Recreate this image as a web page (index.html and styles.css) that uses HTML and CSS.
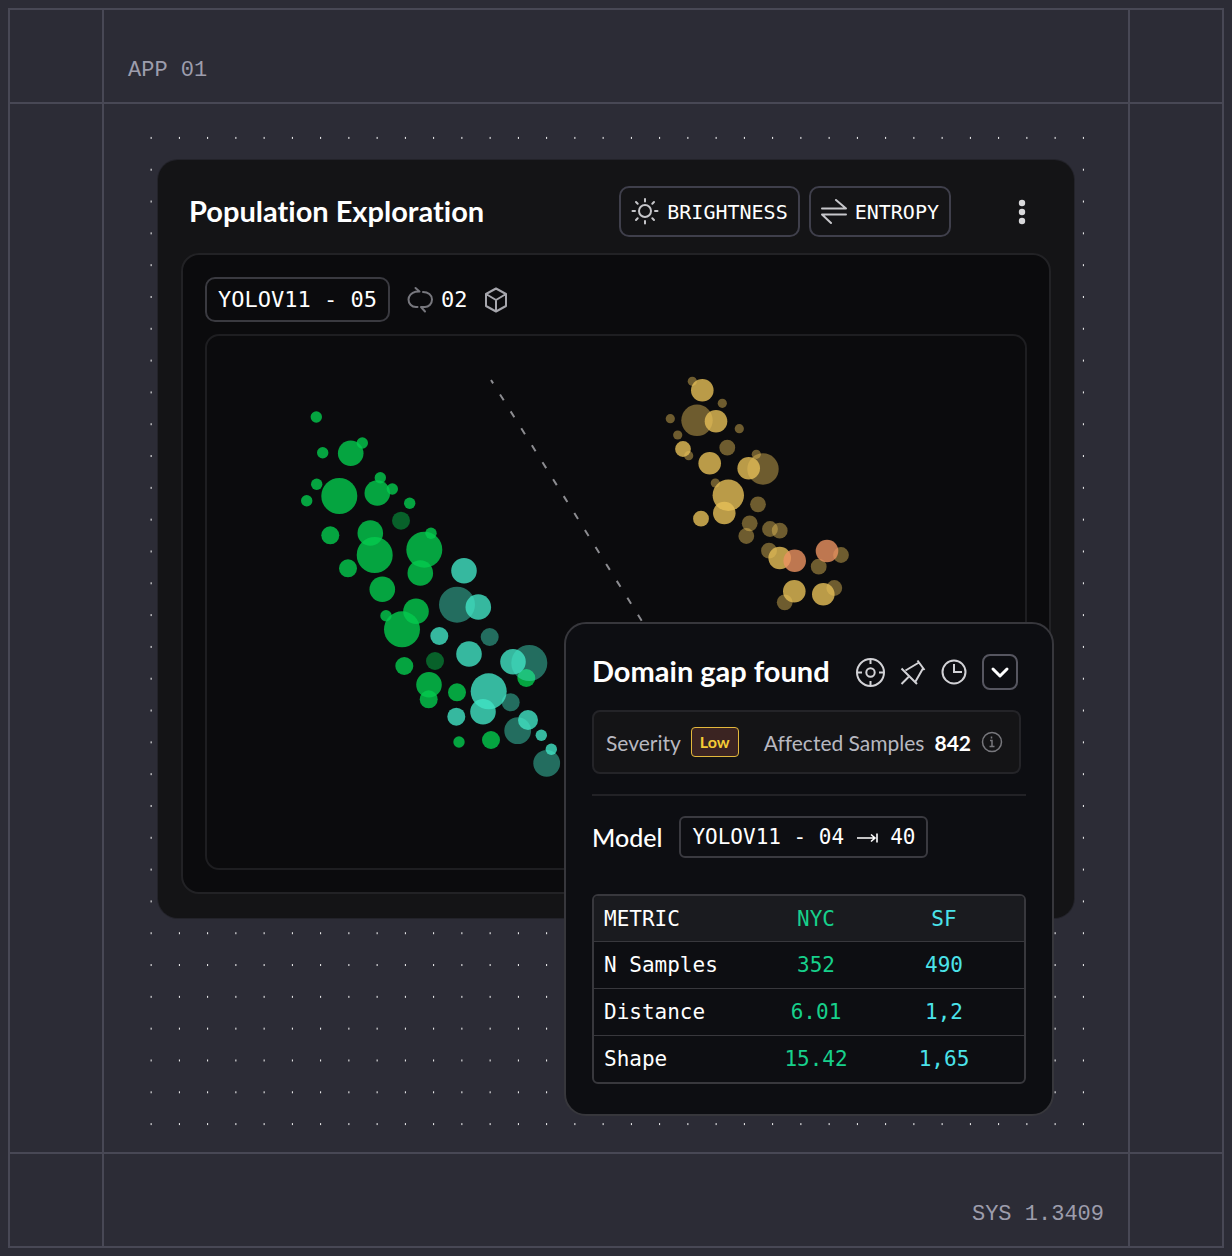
FILE: index.html
```html
<!DOCTYPE html>
<html lang="en">
<head>
  <meta charset="UTF-8">
  <meta name="viewport" content="width=device-width, initial-scale=1.0">
  <title>Population Exploration</title>
  <link rel="stylesheet" href="styles.css">
</head>
<body>
  <div class="frame">
    <!-- Top strip -->
    <div class="cell"></div>
    <header class="cell cell-top">APP 01</header>
    <div class="cell"></div>

    <!-- Middle: dotted canvas with the app window -->
    <div class="cell"></div>
    <main class="cell cell-main">
      <div class="dots">
        <section class="card">
          <div class="card-header">
            <h1>Population Exploration</h1>
            <button class="tool" type="button">
              <svg width="28" height="28" viewBox="0 0 28 28" fill="none" stroke="#c6c6ca" stroke-width="2" stroke-linecap="round">
                <circle cx="14" cy="13" r="6"/>
                <path d="M14 1v2.500M14 23v2.500M1.500 13H4M24 13h2.500M5 4l1.700 1.700M21.300 20.300L23 22M5 22l1.700-1.700M21.300 5.700L23 4"/>
              </svg>
              BRIGHTNESS
            </button>
            <button class="tool" type="button">
              <svg width="26" height="26" viewBox="0 0 26 26" fill="none" stroke="#c6c6ca" stroke-width="2" stroke-linecap="round" stroke-linejoin="round">
                <path d="M1 9.500h24l-10-8.500M25 15.500H1l9 8.500"/>
              </svg>
              ENTROPY
            </button>
            <button class="kebab" type="button" aria-label="More options">
              <svg width="20" height="28" viewBox="0 0 20 28" fill="#d8d8da">
                <circle cx="10" cy="5" r="3.200"/>
                <circle cx="10" cy="14" r="3.200"/>
                <circle cx="10" cy="23" r="3.200"/>
              </svg>
            </button>
          </div>

          <div class="panel">
            <div class="panel-bar">
              <span class="chip">YOLOV11 - 05</span>
              <span class="runs">
                <svg width="28" height="28" viewBox="0 0 28 28" fill="none" stroke="#77777d" stroke-width="2" stroke-linecap="round" stroke-linejoin="round">
                  <path d="M8.500 2l4 3.500-4 .2C4.500 6.500 1.500 10 1.500 13.500 1.500 17.500 4.500 21 9 21h1.500M16 6c5 0 9 3 9 7.500S21.500 21 18 21h-4l4 4.500"/>
                </svg>
                02
              </span>
              <svg width="24" height="26" viewBox="0 0 24 26" fill="none" stroke="#a6a6ac" stroke-width="2" stroke-linejoin="round">
                <path d="M12 1.500l10 5.500v12l-10 5.500L2 19V7zM2 7l10 6 10-6M12 13v11.500"/>
              </svg>
            </div>

            <!-- Scatter plot -->
            <svg class="plot" viewBox="207 336 818 532">
              <path class="split" d="M491 380L650 634"/>
              <g class="green">
                <circle cx="316.300" cy="417" r="5.700"/>
                <circle cx="362.300" cy="443" r="5.700"/>
                <circle cx="350.700" cy="453.300" r="12.800"/>
                <circle cx="322.700" cy="452.700" r="5.700"/>
                <circle cx="380.300" cy="477.700" r="5.700"/>
                <circle cx="316.700" cy="484.300" r="5.700"/>
                <circle cx="306.700" cy="500.700" r="5.700"/>
                <circle cx="339.300" cy="496" r="18"/>
                <circle cx="377.300" cy="493" r="12.800"/>
                <circle cx="392.300" cy="489" r="5.700"/>
                <circle cx="409.700" cy="503.300" r="5.700"/>
                <circle cx="330.300" cy="535.300" r="9"/>
                <circle cx="370.300" cy="533" r="12.800"/>
                <circle cx="374.700" cy="555" r="18"/>
                <circle cx="424.300" cy="549.700" r="18"/>
                <circle cx="431" cy="533.300" r="5.700"/>
                <circle cx="420.300" cy="573" r="12.800"/>
                <circle cx="348" cy="568.300" r="9"/>
                <circle cx="382.300" cy="589.300" r="12.800"/>
                <circle cx="416" cy="611.300" r="12.800"/>
                <circle cx="386" cy="615.700" r="5.700"/>
                <circle cx="402" cy="629.300" r="18"/>
                <circle cx="404.300" cy="666" r="9"/>
                <circle cx="429" cy="684.700" r="12.800"/>
                <circle cx="428.700" cy="699.300" r="9"/>
                <circle cx="457" cy="692.300" r="9"/>
                <circle cx="459" cy="742" r="5.700"/>
                <circle cx="491" cy="740" r="9"/>
                <circle cx="526.300" cy="678" r="9"/>
                <circle class="dim" cx="401" cy="520.700" r="9"/>
                <circle class="dim" cx="435" cy="661" r="9"/>
              </g>
              <g class="teal">
                <circle class="dim" cx="457" cy="604.700" r="18"/>
                <circle class="dim" cx="489.700" cy="637" r="9"/>
                <circle class="dim" cx="529.300" cy="663" r="18"/>
                <circle class="dim" cx="510.700" cy="702.300" r="9"/>
                <circle class="dim" cx="517.700" cy="730.700" r="13.400"/>
                <circle class="dim" cx="546.700" cy="763.300" r="13.400"/>
                <circle cx="464" cy="570.700" r="12.800"/>
                <circle cx="478.300" cy="607" r="12.800"/>
                <circle cx="439.300" cy="636" r="9"/>
                <circle cx="469" cy="654" r="12.800"/>
                <circle cx="513" cy="661.700" r="12.800"/>
                <circle cx="488.700" cy="691.300" r="18"/>
                <circle cx="483" cy="711.700" r="12.800"/>
                <circle cx="456.300" cy="716.700" r="9"/>
                <circle cx="528" cy="720" r="10"/>
                <circle cx="541.300" cy="735.300" r="5.700"/>
                <circle cx="551.300" cy="749.300" r="5.700"/>
              </g>
              <g class="yellow">
                <circle class="dim" cx="692.300" cy="381.300" r="4.600"/>
                <circle class="dim" cx="722.300" cy="403.300" r="4.600"/>
                <circle class="dim" cx="670.300" cy="418.700" r="4.600"/>
                <circle class="dim" cx="739.300" cy="428.700" r="4.600"/>
                <circle class="dim" cx="677.700" cy="435" r="4.600"/>
                <circle class="dim" cx="688.700" cy="455.700" r="4.600"/>
                <circle class="dim" cx="697" cy="420.300" r="15.700"/>
                <circle class="dim" cx="727.300" cy="447.700" r="7.900"/>
                <circle class="dim" cx="756.300" cy="454.300" r="4.600"/>
                <circle class="dim" cx="763" cy="469" r="15.700"/>
                <circle class="dim" cx="715.300" cy="483" r="4.600"/>
                <circle class="dim" cx="758" cy="504.300" r="7.900"/>
                <circle class="dim" cx="749.700" cy="523.300" r="7.900"/>
                <circle class="dim" cx="746.300" cy="536" r="7.900"/>
                <circle class="dim" cx="770" cy="529" r="7.900"/>
                <circle class="dim" cx="779.700" cy="530.700" r="7.900"/>
                <circle class="dim" cx="769" cy="550.700" r="7.900"/>
                <circle class="dim" cx="841" cy="555" r="7.900"/>
                <circle class="dim" cx="818.700" cy="566.700" r="7.900"/>
                <circle class="dim" cx="834.300" cy="588" r="7.900"/>
                <circle class="dim" cx="784.700" cy="602.300" r="7.900"/>
                <circle cx="702.300" cy="390.300" r="11.300"/>
                <circle cx="716" cy="421.300" r="11.300"/>
                <circle cx="683" cy="449" r="7.900"/>
                <circle cx="709.700" cy="463.300" r="11.300"/>
                <circle cx="748.700" cy="468.300" r="11.300"/>
                <circle cx="728.300" cy="495.300" r="15.700"/>
                <circle cx="724.300" cy="513" r="11.300"/>
                <circle cx="701" cy="518.700" r="7.900"/>
                <circle cx="779.700" cy="558" r="11.300"/>
                <circle cx="794.300" cy="591.300" r="11.300"/>
                <circle cx="823.300" cy="594.300" r="11.300"/>
              </g>
              <g class="orange">
                <circle cx="794.700" cy="560.700" r="11.300"/>
                <circle cx="827" cy="551" r="11.300"/>
              </g>
            </svg>
          </div>

          <!-- Finding popover -->
          <aside class="popover">
            <div class="popover-header">
              <h2>Domain gap found</h2>
              <button class="icon-btn" type="button" aria-label="Locate">
                <svg width="30" height="30" viewBox="0 0 30 30" fill="none" stroke="#d2d2d6" stroke-width="2">
                  <circle cx="15.500" cy="15.500" r="13.500"/>
                  <circle cx="15.500" cy="15.500" r="4.200"/>
                  <path d="M15.500 2v5M15.500 24v5M2 15.500h5M24 15.500h5"/>
                </svg>
              </button>
              <button class="icon-btn" type="button" aria-label="Pin">
                <svg width="26" height="26" viewBox="0 0 26 26" fill="none" stroke="#d2d2d6" stroke-width="2">
                  <path d="M17.500 1.500l7 9.500M1.500 9.500L17 25M1.500 25l7-7M19 3.500L5.500 11.500M23.500 8.500L15.500 22.500"/>
                </svg>
              </button>
              <button class="icon-btn" type="button" aria-label="History">
                <svg width="26" height="26" viewBox="0 0 26 26" fill="none" stroke="#d2d2d6" stroke-width="2">
                  <circle cx="13" cy="13" r="11.500"/>
                  <path d="M13 5v8h8"/>
                </svg>
              </button>
              <button class="toggle" type="button" aria-label="Collapse">
                <svg width="20" height="20" viewBox="0 0 20 20" fill="none" stroke="#fff" stroke-width="3" stroke-linecap="round" stroke-linejoin="round">
                  <path d="M3 7l7 7 7-7"/>
                </svg>
              </button>
            </div>

            <div class="summary">
              <span>Severity</span>
              <span class="badge">Low</span>
              <span>Affected Samples</span>
              <strong>842</strong>
              <svg width="22" height="22" viewBox="0 0 22 22" fill="none" stroke="#77777c" stroke-width="1.500">
                <circle cx="11" cy="11" r="9.500"/>
                <path d="M9 9.500h2v6M8.500 15.500h5M10.500 5.500v2"/>
              </svg>
            </div>

            <div class="model">
              <span>Model</span>
              <span class="chip chip-small">
                YOLOV11 - 04
                <svg width="22" height="14" viewBox="0 0 22 14" fill="none" stroke="#fff" stroke-width="1.600">
                  <path d="M1 8h18M15 4.500l4 3.500-4 3.500M21 3.500v9"/>
                </svg>
                40
              </span>
            </div>

            <table class="metrics">
              <thead>
                <tr><th>METRIC</th><th>NYC</th><th>SF</th></tr>
              </thead>
              <tbody>
                <tr><td>N Samples</td><td>352</td><td>490</td></tr>
                <tr><td>Distance</td><td>6.01</td><td>1,2</td></tr>
                <tr><td>Shape</td><td>15.42</td><td>1,65</td></tr>
              </tbody>
            </table>
          </aside>
        </section>
      </div>
    </main>
    <div class="cell"></div>

    <!-- Bottom strip -->
    <div class="cell"></div>
    <footer class="cell cell-bottom">SYS 1.3409</footer>
    <div class="cell"></div>
  </div>
</body>
</html>
```
FILE: styles.css
```css
* {
  box-sizing: border-box;
}
body {
  margin: 8px;
  background: #2c2c36;
  color: #fff;
  font-family: Lato, sans-serif;
  font-variant-ligatures: none;
}
h1, h2 {
  margin: 0;
  padding-bottom: 2px;
  font-size: 29px;
  line-height: 34px;
  font-weight: 700;
  white-space: nowrap;
}
button {
  padding: 0;
  border: none;
  background: none;
  color: inherit;
  cursor: pointer;
}
svg {
  display: block;
  flex: none;
}

/* Outer frame: the gaps show the line colour */
.frame {
  display: grid;
  grid-template-columns: 92px 1fr 92px;
  grid-template-rows: 92px 1fr 92px;
  gap: 2px;
  min-height: calc(100vh - 16px);
  border: 2px solid #484855;
  background: #484855;
}
.cell {
  background: #2c2c36;
}
.cell-top, .cell-bottom {
  display: flex;
  align-items: center;
  padding: 28px 24px 0;
  color: #9d9dac;
  font-family: "Liberation Mono", monospace;
  font-size: 22px;
}
.cell-bottom {
  justify-content: flex-end;
}
.cell-main {
  display: flex;
  padding: 18px 30px 12px 33px;
}
.dots {
  flex: 1;
  padding: 38px 24px 0 21px;
  background-image: radial-gradient(circle, #fff 1px, transparent 1px);
  background-size: 28px 32px;
  background-repeat: round;
}

/* App window */
.card {
  position: relative;
  padding: 26px 23px 24px;
  border-radius: 20px;
  background: #141416;
  box-shadow: 0 0 0 1px #23232a;
}
.card-header {
  display: flex;
  align-items: center;
  gap: 9px;
  padding: 0 19px 0 8px;
  margin-bottom: 16px;
}
.card-header h1 {
  flex: 1;
}
.tool {
  display: flex;
  align-items: center;
  gap: 8px;
  height: 51px;
  padding: 0 10px;
  border: 2px solid #3f3f4b;
  border-radius: 10px;
  font-family: "DejaVu Sans Mono", monospace;
  font-size: 20px;
}
.kebab {
  margin-left: 52px;
}
.panel {
  padding: 22px;
  border: 2px solid #222225;
  border-radius: 18px;
  background: #0b0b0d;
}
.panel-bar {
  display: flex;
  align-items: center;
  gap: 17px;
  margin-bottom: 12px;
}
.chip {
  display: flex;
  align-items: center;
  height: 45px;
  padding: 0 11px;
  border: 2px solid #3a3a40;
  border-radius: 10px;
  font-family: "DejaVu Sans Mono", monospace;
  font-size: 22px;
}
.runs {
  display: flex;
  align-items: center;
  gap: 6px;
  font-family: "DejaVu Sans Mono", monospace;
  font-size: 22px;
}

/* Plot */
.plot {
  width: 100%;
  border: 2px solid #1e1e21;
  border-radius: 14px;
}
.split {
  stroke: #8c8c90;
  stroke-width: 2;
  stroke-dasharray: 7 13;
  stroke-dashoffset: 3;
}
.plot circle {
  opacity: 0.8;
}
.plot .dim {
  opacity: 0.45;
}
.green {
  fill: #04ca4e;
}
.teal {
  fill: #41e4c4;
}
.yellow {
  fill: #e6bf58;
}
.orange {
  fill: #eb9261;
}

/* Popover */
.popover {
  position: absolute;
  top: 462px;
  right: 20px;
  width: 490px;
  padding: 30px 26px;
  border: 2px solid #37373c;
  border-radius: 22px;
  background: #0d0e12;
}
.popover-header {
  display: flex;
  align-items: center;
  gap: 15px;
  padding-right: 8px;
}
.popover-header h2 {
  flex: 1;
}
.toggle {
  display: flex;
  align-items: center;
  justify-content: center;
  width: 36px;
  height: 36px;
  border: 2px solid #565660;
  border-radius: 8px;
}
.summary {
  display: flex;
  align-items: center;
  gap: 10px;
  height: 64px;
  margin: 20px 5px 20px 0;
  padding: 0 12px;
  border: 2px solid #242428;
  border-radius: 8px;
  background: #141416;
  color: #b8b8c0;
  font-size: 21px;
}
.summary strong {
  color: #fff;
}
.badge {
  margin-right: 15px;
  padding: 0 8px;
  border: 1px solid #e3b83c;
  border-radius: 4px;
  background: #3b2422;
  color: #f5cb35;
  font-size: 16px;
  font-weight: 700;
  line-height: 28px;
}
.model {
  display: flex;
  align-items: center;
  gap: 17px;
  padding: 20px 0 36px;
  border-top: 2px solid #222226;
  font-size: 25px;
  font-weight: 500;
}
.chip-small {
  gap: 12px;
  height: 42px;
  border-radius: 6px;
  font-size: 21px;
}
.metrics {
  width: 100%;
  border: 2px solid #38383d;
  border-radius: 6px;
  border-spacing: 0;
  table-layout: fixed;
  overflow: hidden;
  font-family: "DejaVu Sans Mono", monospace;
  font-size: 21px;
}
.metrics th, .metrics td {
  height: 47px;
  padding: 0;
  border-top: 1px solid #38383d;
  font-weight: 400;
  text-align: center;
}
.metrics th {
  height: 45px;
  border-top: none;
  background: #1a1b1f;
}
.metrics th:nth-child(1), .metrics td:nth-child(1) {
  padding-left: 10px;
  text-align: left;
}
.metrics th:nth-child(2), .metrics td:nth-child(2) {
  width: 128px;
  color: #17d08b;
}
.metrics th:nth-child(3), .metrics td:nth-child(3) {
  width: 144px;
  padding-right: 16px;
  color: #4be3ea;
}
```
